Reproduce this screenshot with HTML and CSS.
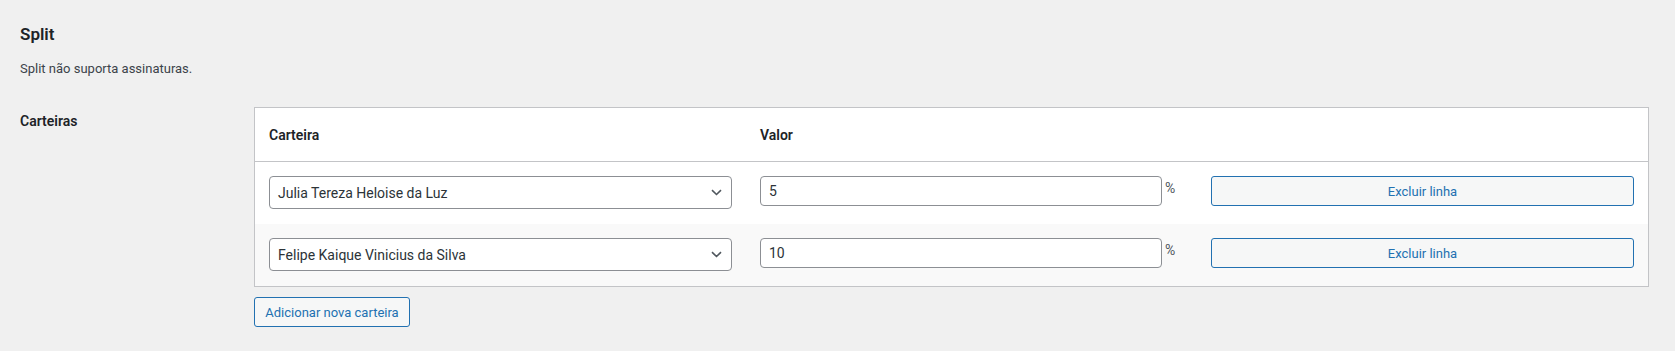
FILE: index.html
```html
<!DOCTYPE html>
<html lang="pt-BR">
<head>
  <meta charset="UTF-8" />
  <title>Split - Carteiras</title>
  <link rel="stylesheet" href="styles.css">
</head>
<body>

<div class="wrap">
  <h2 class="title">Split</h2>
  <p class="desc">Split não suporta assinaturas.</p>

  <div class="form-row">
    <div class="label">Carteiras</div>
    <div class="field">
      <div class="wallets">
        <div class="wallet-row head">
          <div>Carteira</div>
          <div>Valor</div>
        </div>

        <div class="wallet-row">
          <div class="select">
            <span>Julia Tereza Heloise da Luz</span>
            <svg width="11" height="7" viewBox="0 0 11 7"><path d="M1 1.2l4.5 4.3 4.5-4.3" fill="none" stroke="#50575e" stroke-width="1.6"/></svg>
          </div>
          <div class="input">5</div>
          <div class="pct">%</div>
          <button class="btn">Excluir linha</button>
        </div>

        <div class="wallet-row alt">
          <div class="select">
            <span>Felipe Kaique Vinicius da Silva</span>
            <svg width="11" height="7" viewBox="0 0 11 7"><path d="M1 1.2l4.5 4.3 4.5-4.3" fill="none" stroke="#50575e" stroke-width="1.6"/></svg>
          </div>
          <div class="input">10</div>
          <div class="pct">%</div>
          <button class="btn">Excluir linha</button>
        </div>
      </div>

      <button class="btn btn-add">Adicionar nova carteira</button>
    </div>
  </div>
</div>

</body>
</html>
```

FILE: styles.css
```css
body {
  margin: 0;
  background-color: #f0f0f0;
  color: #3c434a;
  font-family: Roboto, "Noto Sans", sans-serif;
  font-size: 13px;
}

.wrap {
  padding: 0 26px 0 20px;
}

.title {
  font-size: 17px;
  line-height: 22px;
  font-weight: 600;
  color: #1d2327;
  margin: 23px 0 0;
}

.desc {
  margin: 14px 0 0;
  line-height: 19px;
}

/* linha do formulário */
.form-row {
  display: grid;
  grid-template-columns: 234px 1fr;
  margin-top: 29px;
}

.label {
  padding-top: 5px;
  font-size: 14px;
  line-height: 18px;
  font-weight: 600;
  color: #1d2327;
}

.wallets {
  background: #fff;
  border: 1px solid #c3c4c7;
}

.wallet-row {
  display: grid;
  grid-template-columns: 491px 405px 46px 1fr;
  align-items: start;
  padding: 14px 14px 15px 14px;
}

.wallet-row.head {
  align-items: center;
  height: 54px;
  padding-top: 0;
  padding-bottom: 0;
  box-sizing: border-box;
  border-bottom: 1px solid #c3c4c7;
  font-size: 14px;
  font-weight: 600;
  color: #1d2327;
}

.wallet-row.alt {
  background: #f9f9f9;
}

.select {
  width: 463px;
  height: 33px;
  box-sizing: border-box;
  border: 1px solid #8c8f94;
  border-radius: 4px;
  background: #fff;
  display: flex;
  align-items: center;
  justify-content: space-between;
  padding: 0 9px 0 8px;
  font-size: 14px;
  color: #2c3338;
}

.input {
  width: 402px;
  height: 30px;
  box-sizing: border-box;
  border: 1px solid #8c8f94;
  border-radius: 4px;
  background: #fff;
  padding: 0 8px;
  line-height: 28px;
  font-size: 14px;
  color: #2c3338;
}

.pct {
  margin-top: 5px;
  line-height: 14px;
  font-size: 14px;
  color: #50575e;
}

.btn {
  height: 30px;
  box-sizing: border-box;
  border: 1px solid #2271b1;
  border-radius: 3px;
  background: #f6f7f7;
  color: #2271b1;
  font-family: Roboto, "Noto Sans", sans-serif;
  font-size: 13px;
  padding: 0 10px;
  cursor: pointer;
}

.wallet-row .btn {
  width: 100%;
}

.btn-add {
  margin-top: 10px;
  width: 156px;
}
```
